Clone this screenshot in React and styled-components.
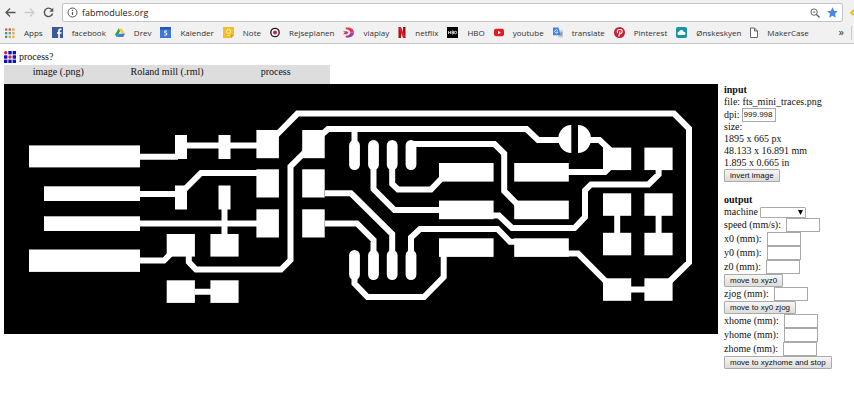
import React from "react";
import styled, { createGlobalStyle } from "styled-components";

const GlobalStyle = createGlobalStyle`
  * { box-sizing: border-box; }
  body { margin: 0; background: #fff; color: #111; }
  button, input, select { margin: 0; border-radius: 0; font: inherit; color: inherit; }
`;

const uiFont = `"Open Sans", "Noto Sans", sans-serif`;

/* Browser chrome */
const Chrome = styled.header`
  background: #f1f1f1;
  border-bottom: 1px solid #c9c9c9;
  font-family: ${uiFont};
  color: #333;
`;
const Toolbar = styled.div`
  display: flex;
  align-items: center;
  height: 22px;
  padding-top: 3px;
`;
const NavButtons = styled.div`
  display: flex;
  flex: none;
  align-items: center;
  gap: 8px;
  width: 62px;
  padding-left: 5px;
`;
const IconButton = styled.button`
  display: flex;
  padding: 0;
  border: 0;
  background: none;
  color: ${(p) => p.$color || "#555"};
`;
const AddressBar = styled.div`
  display: flex;
  flex: 1;
  align-items: center;
  gap: 4px;
  height: 19px;
  padding: 0 4px;
  border: 1px solid #c4c4c4;
  border-radius: 2px;
  background: #fff;
  color: #555;
`;
const AddressInput = styled.input`
  flex: 1;
  min-width: 0;
  height: 15px;
  padding: 0;
  border: 0;
  outline: 0;
  background: none;
  color: #222;
  font-size: 9px;
`;
const ToolbarEnd = styled.div`
  display: flex;
  flex: none;
  justify-content: flex-end;
  width: 11px;
`;
const BookmarkBar = styled.nav`
  display: flex;
  align-items: center;
  height: 21px;
  padding: 0 2px 0 5px;
`;
const Bookmark = styled.a`
  display: flex;
  flex: none;
  align-items: center;
  gap: 9px;
  margin-right: 9px;
  color: #333;
  font-size: 8px;
  line-height: 12px;
  text-decoration: none;
`;
const Overflow = styled.button`
  margin-left: auto;
  padding: 0 7px 2px 0;
  border: 0;
  border-right: 1px solid #ccc;
  background: none;
  font-size: 11px;
  line-height: 12px;
`;

/* Page */
const Page = styled.main`
  padding: 5px 4px;
  font-family: "Liberation Serif", "Times New Roman", serif;
  font-size: 10px;
  line-height: 12px;
`;
const Title = styled.div`
  display: flex;
  align-items: center;
  gap: 3px;
  height: 16px;
  padding-bottom: 1px;
`;
const Menu = styled.div`
  display: grid;
  grid-template-columns: repeat(3, 1fr);
  width: 326px;
  max-width: 100%;
  height: 19px;
  background: #ddd;
`;
const MenuItem = styled.button`
  padding: 0 0 6px;
  border: 0;
  background: none;
`;
const Workspace = styled.div`
  display: flex;
  align-items: flex-start;
  gap: 6px;
`;
const Board = styled.svg`
  display: block;
  flex: 1;
  min-width: 0;
  background: #000;
`;
const Panel = styled.aside`
  flex: none;
  width: 126px;
  white-space: nowrap;
`;
const Section = styled.section`
  margin-bottom: 12px;
`;
const Heading = styled.h2`
  margin: 0;
  font-size: 10px;
  line-height: 12px;
`;
const Line = styled.div`
  height: 12px;
`;
const Field = styled.div`
  display: flex;
  align-items: center;
  gap: ${(p) => (p.$tight ? 2 : 5)}px;
  height: ${(p) => (p.$short ? 12 : p.$tight ? 13 : 14)}px;
`;
const TextBox = styled.input`
  width: 34px;
  height: 14px;
  padding: 0 1px;
  border: 1px solid #aaa;
  background: #fff;
  font-family: "Liberation Sans", Arial, sans-serif;
  font-size: 8px;
`;
const Select = styled.select`
  width: 46px;
  height: 11px;
  padding: 0;
  border: 1px solid #aaa;
  border-radius: 1px;
  appearance: none;
  background: #fff;
  font-size: 8px;
`;
const SelectWrap = styled.span`
  display: grid;
  align-items: center;
  & > * { grid-area: 1 / 1; }
  & > svg { justify-self: end; margin-right: 3px; pointer-events: none; }
`;
const Button = styled.button`
  display: block;
  height: 13px;
  padding: 0 5px;
  border: 1px solid #aaa;
  border-radius: 1px;
  background: linear-gradient(#f6f6f6, #dcdcdc);
  font-family: "Liberation Sans", Arial, sans-serif;
  font-size: 8px;
  line-height: 11px;
`;

const Icon = ({ w = 11, h = 11, box = "0 0 11 11", children }) => (
  <svg width={w} height={h} viewBox={box} fill="none" aria-hidden="true">{children}</svg>
);

const grid3 = [0, 1, 2].flatMap((y) => [0, 1, 2].map((x) => [x, y]));
const appColors = ["#d9534a", "#d9534a", "#e2a13b", "#4a9a5b", "#5b8fd9", "#e2a13b", "#4a9a5b", "#d9a03b", "#e2b33b"];

const bookmarks = [
  ["Apps", <Icon w={10}>{grid3.map(([x, y], i) => <rect key={i} x={x * 4} y={1 + y * 4} width="2.500" height="2.500" fill={appColors[i]} />)}</Icon>],
  ["facebook", <Icon><path fill="#3b5998" d="M0 0h11v11H0z" /><path d="M7 11V3.8Q7 2 9.5 2.2M5 6h4.500" stroke="#fff" strokeWidth="1.600" /></Icon>],
  ["Drev", <Icon w={10}><path fill="#2c9f5c" d="M4 1 0 8l2 2.500L5.800 3.500z" /><path fill="#f9cc3c" d="M4 1h3.500L11 7H7.500z" /><path fill="#3f7fdc" d="M4 7h7l-2 3.500H2z" /></Icon>],
  ["Kalender", <Icon><path fill="#3f78d8" d="M0 0h11v11H0z" /><path fill="#2455b0" d="M0 0h11v2.500H0z" /><path d="M7 4H4.700v1.800Q7 5.500 7 7T4.300 8.300" stroke="#fff" /></Icon>],
  ["Note", <Icon><path fill="#f5be28" d="M0 0h11v8l-3 3H0z" /><path fill="#d99b16" d="M11 8H8v3z" /><circle cx="5.500" cy="4.500" r="2" stroke="#fff3c4" /><path d="M4.500 8.500h2" stroke="#fff3c4" /></Icon>],
  ["Rejseplanen", <Icon w={10}><circle cx="5.500" cy="5.500" r="4.600" fill="#fff" stroke="#251b22" strokeWidth="1.500" /><circle cx="5.500" cy="5.500" r="2.200" fill="#d51f35" /></Icon>],
  ["viaplay", <Icon box="0 0 12 11"><path fill="#e3364e" d="M3 0c5-.5 9 1.500 9 5.500l-4 0C8 3 6 2.500 3 2z" /><path fill="#a63f98" d="M12 5.500C12 10 7.500 11.500 3 11V9c3-.3 5-1 5-3.500z" /><path fill="#d13468" d="M0 4h4l2 1.500L4 7.500H0l2-2z" /></Icon>],
  ["netflix", <Icon w={8} box="0 0 8 11"><path fill="#a80f19" d="M.5 0H3v11H.5zM5 0h2.500v11H5z" /><path fill="#e21c2a" d="M.5 0H3l4.500 11H5z" /></Icon>],
  ["HBO", <Icon><path fill="#000" d="M0 0h11v11H0z" /><path d="M1.500 4v3M3.500 4v3M1.500 5.500h2M5 4v3h1.500V4zM5 5.500h1.500" stroke="#ddd" strokeWidth=".8" /><circle cx="8.500" cy="5.500" r="1.200" stroke="#ddd" /></Icon>],
  ["youtube", <Icon w={10}><rect y="1.500" width="11" height="8" rx="2" fill="#e31c20" /><path fill="#fff" d="m4.500 3.700 3 1.800-3 1.800z" /></Icon>],
  ["translate", <Icon w={10}><path fill="#c9cdd3" d="M4 3h7v8H6z" /><path fill="#4382df" d="M0 0h6l2.500 8.500H0z" /><path d="M5.300 3.300A1.800 1.800 0 1 0 5.500 5H4" stroke="#fff" strokeWidth=".9" /><path d="M7.500 6H10.500M9.800 6 7.800 9M8 7l2 2" stroke="#66788f" strokeWidth=".7" /></Icon>],
  ["Pinterest", <Icon><circle cx="5.500" cy="5.500" r="5.500" fill="#c91f35" /><path d="M4.700 9.500 6 4.500M3.500 6Q2.500 2.500 5.700 2.500T8 5.300Q7 7.500 5.400 6.500" stroke="#fff" strokeWidth="1.100" /></Icon>],
  ["Ønskeskyen", <Icon><rect width="11" height="11" rx="2" fill="#1793a5" /><path fill="#fff" d="M3 8a1.600 1.600 0 0 1 0-3.200A2.500 2.500 0 0 1 7.800 5 1.500 1.500 0 0 1 8.200 8z" /></Icon>],
  ["MakerCase", <Icon w={8} box="0 0 8 11"><path fill="#fff" stroke="#666" d="M.5 1h4l3 3v6.500h-7zM4.500 1v3h3" /></Icon>],
];

/* Copper pads: x, y, width, height */
const pads = [
  [29, 145.4, 111, 22], [44, 186.3, 96, 14.700], [44, 216.3, 96, 14.700], [29, 249.5, 111, 22.400],
  ...[175, 218.5].flatMap((x) => [135, 185.5].map((y) => [x, y, 12, 24])),
  ...[166.7, 210.4].flatMap((x) => [234, 280.3].map((y) => [x, y, 28.200, 22.600])),
  ...[256.4, 302.2].flatMap((x) => [130, 169.3, 209.3].map((y) => [x, y, 22.500, 28.200])),
  ...[439, 514.2].flatMap((x) => [163, 200.6, 238.3].map((y) => [x, y, 54.600, 18.600])),
  ...[603, 644.4].flatMap((x) => [147.6, 193.3, 232.8, 278.3].map((y) => [x, y, 28.200, 22.500])),
];
const pins = [354.5, 373.5, 392.2, 411].flatMap((x) => [140, 250].map((y) => [x - 5.4, y]));
const traces = [
  "M140 156.700H178", "M187 145.500H257", "M140 194H176", "M185 189 201 173H257", "M140 223.400H257",
  "M224.500 209V235", "M140 260.500H164L171 253.500", "M188.800 256V262L196 269.500H281L290.500 260V166.500L305 152",
  "M195 291.700H211", "M276 135.500 297.500 113.600H674L689 128.500V262.500L669 282",
  "M322 134.500 328 129H526.500L538 140H560", "M354.500 129V146", "M411 144H494.500L504.200 153.500V191L518 205",
  "M373.500 165V189L394.500 210H440", "M392.200 165V184L398 189.500H431L442 178", "M325 193.300H351L392.200 234V255",
  "M325 223.400H357L373.500 240V255", "M411 255V237.500L420 229H497.500L510 241.800H515",
  "M354.500 276V283.500L367.500 297H424L443.700 277V255", "M590 140H599.500L611 151", "M568 172H605L609 168",
  "M617.200 215V234", "M658.600 215V234", "M630 289.500H646", "M658.600 169V174.500L648.500 184.500H591L585 190.500V217L574.500 228H512L499 215.500H493",
  "M568 253.500H578L606 281.500",
];

const Circuit = () => (
  <Board viewBox="4 84 714 250" role="img" aria-label="Circuit traces">
    <g fill="#fff">
      {pads.map(([x, y, w, h], i) => <rect key={i} x={x} y={y} width={w} height={h} />)}
      {pins.map(([x, y], i) => <rect key={i} x={x} y={y} width="10.800" height="30" rx="5.400" />)}
      <path d="M571.300 125A13 14 0 0 0 571.300 153zM578 125A13 14 0 0 1 578 153z" />
    </g>
    <path d={traces.join("")} fill="none" stroke="#fff" strokeWidth="6" />
  </Board>
);

const NumberField = ({ id, label, value = "", tight }) => (
  <Field $tight={tight}>
    <label htmlFor={id}>{label}</label>
    <TextBox id={id} type="text" defaultValue={value} />
  </Field>
);

export default function App() {
  return (
    <>
      <GlobalStyle />
      <Chrome>
        <Toolbar>
          <NavButtons>
            <IconButton aria-label="Back"><Icon><path d="M10.500 5.500H1M5 1.500l-4 4 4 4" stroke="currentColor" strokeWidth="1.300" /></Icon></IconButton>
            <IconButton aria-label="Forward" $color="#ccc"><Icon><path d="M.5 5.500H10M6 1.500l4 4-4 4" stroke="currentColor" strokeWidth="1.300" /></Icon></IconButton>
            <IconButton aria-label="Reload"><Icon><path d="M8.800 2.700A4.200 4.200 0 1 0 9.600 6.500" stroke="currentColor" strokeWidth="1.400" /><path d="M10.300.8v4h-4z" fill="currentColor" /></Icon></IconButton>
          </NavButtons>
          <AddressBar>
            <Icon><circle cx="5.500" cy="5.500" r="4.500" stroke="currentColor" /><path d="M5.500 5v3M5.500 2.800v1.200" stroke="currentColor" strokeWidth="1.200" /></Icon>
            <AddressInput aria-label="Address" defaultValue="fabmodules.org" />
            <IconButton aria-label="Zoom"><Icon w={10} h={10}><circle cx="4.500" cy="4.500" r="3.500" stroke="currentColor" /><path d="m7 7 3.500 3.500" stroke="currentColor" strokeWidth="1.400" /><path d="M3 4.500h3" stroke="currentColor" /></Icon></IconButton>
            <IconButton aria-label="Bookmark this page" $color="#4a86e8"><Icon w={14} box="-3 0 14 11"><path fill="currentColor" d="m5.500.3 1.600 3.500 3.700.4L8 6.800l.8 3.900-3.300-2-3.300 2L3 6.800.2 4.200l3.700-.4z" /></Icon></IconButton>
          </AddressBar>
          <ToolbarEnd><Icon w={4} h={8} box="0 0 4 8"><path d="M4 1 1 4l3 2" stroke="#dcc62c" strokeWidth="2" /></Icon></ToolbarEnd>
        </Toolbar>
        <BookmarkBar>
          {bookmarks.map(([name, icon]) => <Bookmark key={name} href="#">{icon}{name}</Bookmark>)}
          <Overflow aria-label="More bookmarks">»</Overflow>
        </BookmarkBar>
      </Chrome>
      <Page>
        <Title>
          <Icon w={12} h={12} box="0 0 12 12">
            {grid3.map(([x, y], i) => i === 0 || i === 4
              ? <circle key={i} cx={1.7 + x * 4.3} cy={1.7 + y * 4.3} r="1.700" fill="#d8203c" />
              : <rect key={i} x={x * 4.3} y={y * 4.3} width="3.400" height="3.400" fill="#1414b4" />)}
          </Icon>
          process?
        </Title>
        <Menu>
          <MenuItem>image (.png)</MenuItem>
          <MenuItem>Roland mill (.rml)</MenuItem>
          <MenuItem>process</MenuItem>
        </Menu>
        <Workspace>
          <Circuit />
          <Panel>
            <Section>
              <Heading>input</Heading>
              <Line>file: fts_mini_traces.png</Line>
              <NumberField id="dpi" label="dpi:" value="999.998" tight />
              <Line>size:</Line>
              <Line>1895 x 665 px</Line>
              <Line>48.133 x 16.891 mm</Line>
              <Line>1.895 x 0.665 in</Line>
              <Button>invert image</Button>
            </Section>
            <Section>
              <Heading>output</Heading>
              <Field $tight $short>
                <label htmlFor="machine">machine</label>
                <SelectWrap>
                  <Select id="machine"><option /></Select>
                  <Icon w={5} h={5} box="0 0 5 5"><path fill="#000" d="M0 0h5L2.500 5z" /></Icon>
                </SelectWrap>
              </Field>
              <NumberField id="speed" label="speed (mm/s):" />
              <NumberField id="x0" label="x0 (mm):" />
              <NumberField id="y0" label="y0 (mm):" />
              <NumberField id="z0" label="z0 (mm):" />
              <Button>move to xyz0</Button>
              <NumberField id="zjog" label="zjog (mm):" />
              <Button>move to xy0 zjog</Button>
              <NumberField id="xhome" label="xhome (mm):" />
              <NumberField id="yhome" label="yhome (mm):" />
              <NumberField id="zhome" label="zhome (mm):" />
              <Button>move to xyzhome and stop</Button>
            </Section>
          </Panel>
        </Workspace>
      </Page>
    </>
  );
}
